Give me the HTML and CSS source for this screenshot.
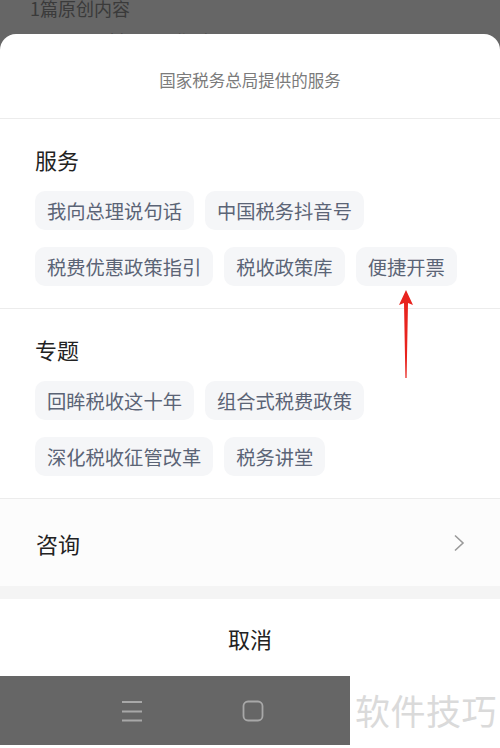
FILE: index.html
```html
<!DOCTYPE html>
<html lang="zh-CN">
<head>
<meta charset="utf-8">
<title>国家税务总局提供的服务</title>
<link rel="stylesheet" href="styles.css">
</head>
<body>
<div class="screen">
  <div class="backdrop">
    <div class="bd-line1">1篇原创内容</div>
    <div class="bd-line2">— 原创 · 作者</div>
  </div>
  <div class="sheet">
    <div class="sheet-title">国家税务总局提供的服务</div>
    <section class="group">
      <h2 class="group-title">服务</h2>
      <div class="chips">
        <span class="chip">我向总理说句话</span>
        <span class="chip">中国税务抖音号</span>
        <span class="chip">税费优惠政策指引</span>
        <span class="chip">税收政策库</span>
        <span class="chip">便捷开票</span>
      </div>
    </section>
    <section class="group">
      <h2 class="group-title">专题</h2>
      <div class="chips">
        <span class="chip">回眸税收这十年</span>
        <span class="chip">组合式税费政策</span>
        <span class="chip">深化税收征管改革</span>
        <span class="chip">税务讲堂</span>
      </div>
    </section>
    <div class="consult">
      <span class="consult-label">咨询</span>
      <svg class="chevron" width="12" height="18" viewBox="0 0 12 18"><path d="M2 1.5 L10 9 L2 16.5" fill="none" stroke="#9a9a9a" stroke-width="1.6"/></svg>
    </div>
    <div class="spacer"></div>
    <div class="cancel">取消</div>
  </div>
  <div class="bottom">
    <div class="navbar">
      <svg class="nav-icon" width="22" height="22" viewBox="0 0 22 22"><path d="M1 2 H21 M1 11.5 H21 M1 20.5 H21" stroke="#a8a8a8" stroke-width="1.8"/></svg>
      <svg class="nav-icon" width="22" height="22" viewBox="0 0 22 22"><rect x="1.5" y="1.5" width="19" height="19" rx="4.5" fill="none" stroke="#a8a8a8" stroke-width="1.8"/></svg>
    </div>
    <div class="watermark">软件技巧</div>
  </div>
  <svg class="arrow" width="20" height="90" viewBox="0 0 20 90"><path d="M10 0 L17 15 L12 13 L10.6 88 L9.4 88 L8 13 L3 15 Z" fill="#e8231e"/></svg>
</div>
</body>
</html>
```

FILE: styles.css
```css
* { box-sizing: border-box; }
html, body { margin: 0; padding: 0; background: #fff; }
body {
  font-family: "Noto Sans CJK SC", "Noto Sans", sans-serif;
  width: 500px;
  height: 748px;
  overflow: hidden;
}
.screen {
  position: relative;
  width: 500px;
  height: 748px;
  background: #666666;
  display: flex;
  flex-direction: column;
}
.backdrop {
  height: 34px;
  overflow: hidden;
  padding-left: 30px;
  color: #3a3a3a;
}
.bd-line1 {
  font-size: 18px;
  line-height: 20px;
  margin-top: -2px;
}
.bd-line2 {
  font-size: 18px;
  line-height: 20px;
  margin-top: 13px;
  padding-left: 18px;
  letter-spacing: 6px;
}
.sheet {
  background: #fff;
  border-radius: 16px 16px 0 0;
  display: flex;
  flex-direction: column;
}
.sheet-title {
  height: 85px;
  padding-top: 8px;
  display: flex;
  align-items: center;
  justify-content: center;
  font-size: 16.5px;
  color: #7b7b7b;
  border-bottom: 1px solid #ececec;
}
.group {
  padding: 25px 35px 22px;
  border-bottom: 1px solid #ececec;
}
.group-title {
  margin: 0;
  font-size: 22px;
  line-height: 30px;
  font-weight: 400;
  color: #222;
}
.chips {
  margin-top: 17px;
  display: flex;
  flex-wrap: wrap;
  column-gap: 11px;
  row-gap: 17px;
  width: 430px;
}
.chip {
  height: 39px;
  padding: 0 12px;
  display: inline-flex;
  align-items: center;
  font-size: 19.3px;
  color: #5b6476;
  background: #f5f6f8;
  border-radius: 10px;
}
.consult {
  height: 87px;
  background: #fcfcfc;
  display: flex;
  align-items: center;
  justify-content: space-between;
  padding: 0 35px 0 36px;
}
.consult-label {
  font-size: 22px;
  color: #222;
}
.spacer {
  height: 13px;
  background: #f4f4f4;
}
.cancel {
  height: 77px;
  display: flex;
  align-items: center;
  justify-content: center;
  font-size: 22px;
  color: #222;
  background: #fff;
}
.bottom {
  flex: 1;
  display: flex;
  background: #fff;
}
.navbar {
  width: 350px;
  height: 69px;
  background: #666666;
  display: flex;
  align-items: center;
  padding-left: 121px;
  gap: 99px;
}
.watermark {
  font-size: 35px;
  color: #dadada;
  padding-left: 5px;
  padding-top: 9px;
  line-height: 50px;
  letter-spacing: 0.5px;
}
.arrow {
  position: absolute;
  left: 396px;
  top: 290px;
}
```
